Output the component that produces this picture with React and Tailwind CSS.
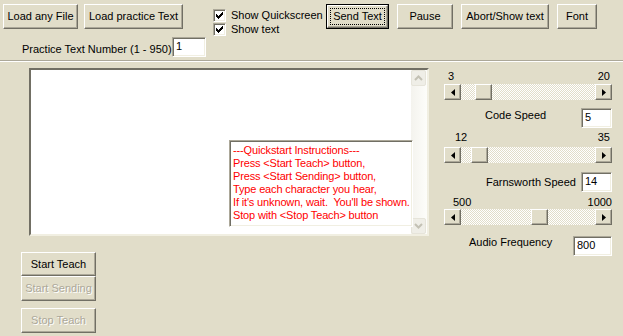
import React from 'react';

const raised =
  'border border-t-white border-l-white border-b-[#716f64] border-r-[#716f64] shadow-[inset_-1px_-1px_0_#aca899]';
const sunken =
  'border border-t-[#aca899] border-l-[#aca899] border-b-white border-r-white shadow-[inset_1px_1px_0_#716f64,inset_-1px_-1px_0_#f1efe2]';

const Btn = ({ children, className = '', disabled }) => (
  <div className={`flex items-center justify-center bg-[#e1ddc9] ${raised} ${className}`}>
    <span className={disabled ? 'text-[#aca899] [text-shadow:1px_1px_0_#ffffff]' : ''}>{children}</span>
  </div>
);

const Check = ({ label }) => (
  <div className="flex h-[14px] items-center">
    <div className={`flex h-[13px] w-[13px] items-center justify-center bg-white ${sunken}`}>
      <svg width="7" height="7" viewBox="0 0 7 7">
        <path d="M0 2h1v1h1v1h1V3h1V2h1V1h1V0h1v3H6v1H5v1H4v1H3v1H2V6H1V5H0z" fill="#000" />
      </svg>
    </div>
    <span className="ml-[5px] leading-[13px]">{label}</span>
  </div>
);

const Field = ({ value, className = '' }) => (
  <div className={`bg-white pl-[3px] pt-[2px] leading-[13px] text-black ${sunken} ${className}`}>{value}</div>
);

const Arrow = ({ dir }) => (
  <div className={`flex h-[16px] w-[17px] shrink-0 items-center justify-center bg-[#e1ddc9] ${raised}`}>
    <svg width="4" height="7" viewBox="0 0 4 7">
      {dir === 'left' ? <path d="M4 0v7L0 3.5z" fill="#000" /> : <path d="M0 0v7l4-3.5z" fill="#000" />}
    </svg>
  </div>
);

const HScroll = ({ min, max, value }) => {
  const left = Math.round(((value - min) / (max - min)) * (134 - 17));
  return (
    <div className="flex h-[16px] w-[168px]">
      <Arrow dir="left" />
      <div className="relative flex-1 bg-[repeating-conic-gradient(#ffffff_0%_25%,#e1ddc9_0%_50%)] bg-size-[2px_2px]">
        <div style={{ left }} className={`absolute top-0 h-[16px] w-[17px] bg-[#e1ddc9] ${raised}`} />
      </div>
      <Arrow dir="right" />
    </div>
  );
};

const XpBtn = ({ up }) => (
  <div className="flex h-[16px] w-[15px] items-center justify-center rounded-[2px] border border-[#e6e4da] bg-[#efeee7]">
    <svg width="9" height="6" viewBox="0 0 9 6">
      <path d={up ? 'M1 5l3.5-3.5L8 5' : 'M1 1l3.5 3.5L8 1'} stroke="#c3c1b4" strokeWidth="2" fill="none" />
    </svg>
  </div>
);

const quickstart = [
  '---Quickstart Instructions---',
  'Press <Start Teach> button,',
  'Press <Start Sending> button,',
  'Type each character you hear,',
  "If it's unknown, wait.  You'll be shown.",
  'Stop with <Stop Teach> button',
];

export default function App() {
  return (
    <div className="h-[336px] w-[623px] overflow-hidden bg-[#e1ddc9] font-['Liberation_Sans',Arial,sans-serif] text-[11px] text-black">
      <div className="flex h-[29px] items-start pl-[3px] pt-[4px]">
        <Btn className="h-[25px] w-[75px]">Load any File</Btn>
        <Btn className="ml-[6px] h-[25px] w-[99px]">Load practice Text</Btn>
        <div className="ml-[30px] flex w-[113px] flex-col pt-[4px]">
          <Check label="Show Quickscreen" />
          <Check label="Show text" />
        </div>
        <div className="flex h-[25px] w-[63px] border border-black bg-[#e1ddc9]">
          <div className={`flex flex-1 items-center justify-center p-[2px] ${raised}`}>
            <div className="flex h-full w-full items-center justify-center border border-dotted border-black">Send Text</div>
          </div>
        </div>
        <Btn className="ml-[8px] h-[25px] w-[56px]">Pause</Btn>
        <Btn className="ml-[8px] h-[25px] w-[88px]">Abort/Show text</Btn>
        <Btn className="ml-[8px] h-[25px] w-[40px]">Font</Btn>
      </div>

      <div className="mt-[8px] flex items-end pl-[22px]">
        <span className="w-[150px] pb-[1px] leading-[13px]">Practice Text Number (1 - 950)</span>
        <Field value="1" className="h-[20px] w-[34px]" />
      </div>

      <div className="mt-[3px] h-px bg-[#aca899]" />
      <div className="h-px bg-white" />

      <div className="flex">
        <div className="flex w-[429px] flex-col pl-[21px]">
          <div className="relative ml-[8px] mt-[6px] flex h-[168px] w-[400px] border-2 border-t-[#716f64] border-l-[#716f64] border-b-[#f1efe2] border-r-[#f1efe2] bg-white">
            <div className="flex-1" />
            <div className="flex w-[16px] flex-col justify-between bg-[linear-gradient(to_right,#f4f3ee,#fdfdfa)]">
              <XpBtn up />
              <XpBtn />
            </div>
            <div className={`absolute left-[198px] top-[70px] h-[87px] w-[184px] bg-white pl-[3px] pt-[3px] tracking-[-0.15px] text-[#ff0000] ${sunken}`}>
              {quickstart.map((line) => (
                <div key={line} className="whitespace-pre leading-[13px]">
                  {line}
                </div>
              ))}
            </div>
          </div>
          <Btn className="mt-[16px] h-[24px] w-[75px]">Start Teach</Btn>
          <Btn disabled className="h-[25px] w-[75px]">Start Sending</Btn>
          <Btn disabled className="mt-[7px] h-[25px] w-[75px]">Stop Teach</Btn>
        </div>

        <div className="ml-[15px] flex w-[168px] flex-col">
          <div className="mt-[8px] flex h-[13px] justify-between leading-[13px]">
            <span className="pl-[4px]">3</span>
            <span className="pr-[2px]">20</span>
          </div>
          <div className="mt-[1px]">
            <HScroll min={3} max={20} value={5} />
          </div>
          <div className="mt-[8px] flex h-[20px] items-start">
            <span className="pl-[41px] pt-[1px] leading-[13px]">Code Speed</span>
            <Field value="5" className="ml-auto h-[20px] w-[31px]" />
          </div>
          <div className="mt-[3px] flex h-[13px] justify-between leading-[13px]">
            <span className="pl-[11px]">12</span>
            <span className="pr-[2px]">35</span>
          </div>
          <div className="mt-[3px]">
            <HScroll min={12} max={35} value={14} />
          </div>
          <div className="mt-[9px] flex h-[20px] items-center">
            <span className="pl-[42px] leading-[13px]">Farnsworth Speed</span>
            <Field value="14" className="ml-auto h-[20px] w-[31px]" />
          </div>
          <div className="mt-[4px] flex h-[13px] justify-between leading-[13px]">
            <span className="pl-[9px]">500</span>
            <span>1000</span>
          </div>
          <HScroll min={500} max={1000} value={800} />
          <div className="mt-[11px] flex h-[20px] items-start">
            <span className="pl-[25px] leading-[13px]">Audio Frequency</span>
            <Field value="800" className="ml-auto h-[20px] w-[39px]" />
          </div>
        </div>
      </div>
    </div>
  );
}
